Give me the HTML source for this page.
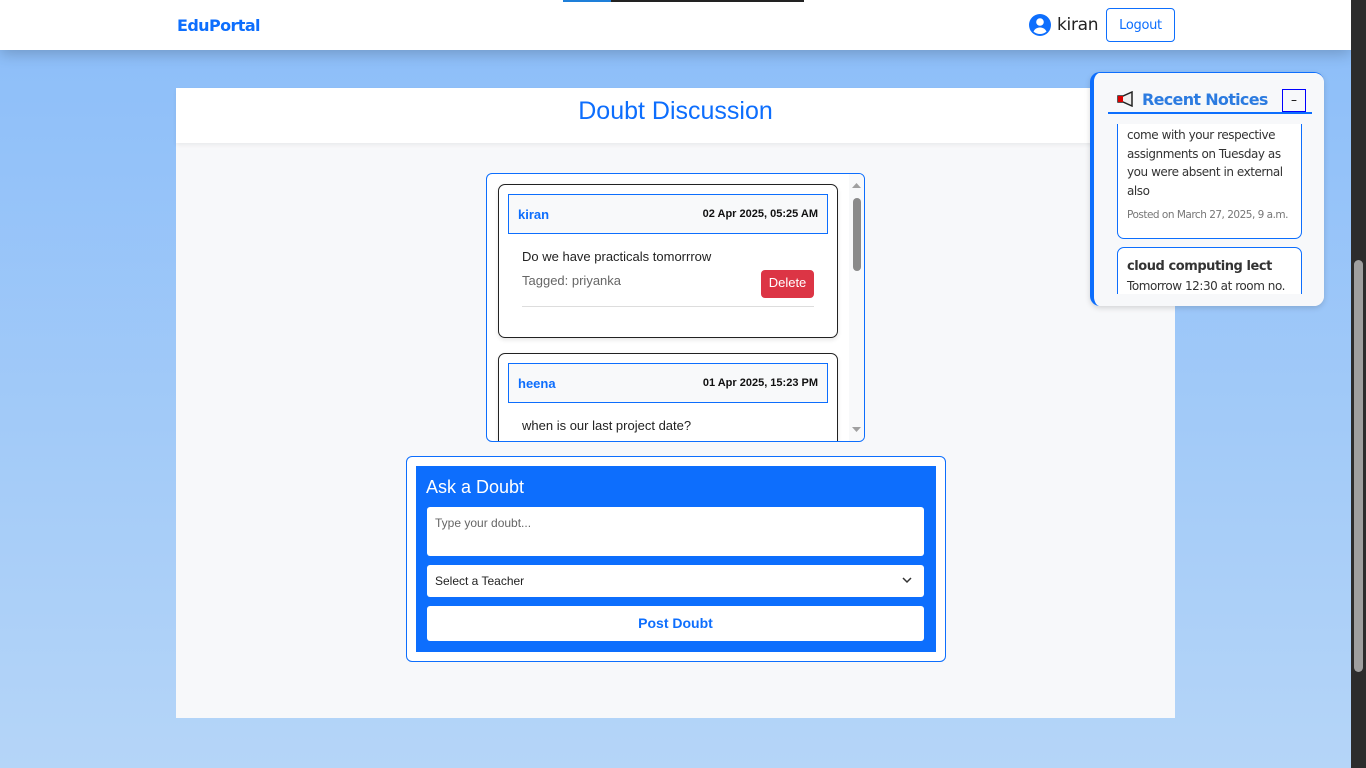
<!DOCTYPE html>
<html><head><meta charset="utf-8"><style>
*{box-sizing:border-box;margin:0;padding:0}
body{width:1366px;height:768px;overflow:hidden;font-family:"Liberation Sans",Arial,sans-serif;background:linear-gradient(#8bbdf9,#b5d5f8);position:relative}
.nav{position:absolute;left:0;top:0;width:1351px;height:50px;background:#fff;box-shadow:0 4px 14px rgba(0,0,0,.2)}
.brand{position:absolute;left:177px;top:16px;font-family:"DejaVu Sans",sans-serif;font-weight:bold;font-size:16px;color:#0d6efd;letter-spacing:-.6px}
.user{position:absolute;left:1029px;top:14px;display:flex;align-items:center;gap:6px;font-family:"DejaVu Sans",sans-serif;font-size:17px;color:#222;letter-spacing:-.3px}
.logout{position:absolute;left:1106px;top:8px;width:69px;height:34px;border:1px solid #0d6efd;border-radius:4px;color:#0d6efd;font-family:"DejaVu Sans",sans-serif;font-size:13px;text-align:center;line-height:34px;letter-spacing:-.3px}
.bar{position:absolute;top:0;left:563px;height:2px;width:241px;background:#222}
.bar i{display:block;width:48px;height:2px;background:#1e7fd9}
.sb{position:absolute;right:0;top:0;width:15px;height:768px;background:#2c2c2c}
.sb i{position:absolute;left:3px;top:260px;width:9px;height:412px;background:#9f9f9f;border-radius:5px}
.panel{position:absolute;left:176px;top:88px;width:999px;height:630px;background:#f7f8fa}
.phead{height:55px;background:#fff;text-align:center;font-size:25px;color:#0d6efd;line-height:46px;box-shadow:0 2px 4px rgba(0,0,0,.06)}
.chat{position:absolute;left:310px;top:85px;width:379px;height:269px;border:1px solid #0d6efd;border-radius:6px;background:#fff;overflow:hidden}
.chat .s{position:absolute;right:0;top:0;width:15px;height:100%;background:#f8f9fa}
.chat .s i{position:absolute;left:4px;top:24px;width:8px;height:73px;background:#8a8a8a;border-radius:4px}
.card{position:absolute;left:11px;width:340px;border:1px solid #222;border-radius:7px;background:#fff;box-shadow:0 2px 4px rgba(0,0,0,.1)}
.ch{margin:9px 9px 0;height:40px;border:1px solid #0d6efd;background:#f8f9fa;display:flex;justify-content:space-between;align-items:center;padding:0 9px}
.ch b{color:#0d6efd;font-size:13px}
.ch span{font-size:11px;font-weight:bold;color:#111}
.msg{padding:0 23px;font-size:13px;color:#222;margin-top:15px}
.ask{position:absolute;left:230px;top:368px;width:540px;height:206px;border:1px solid #0d6efd;border-radius:6px;background:#fff}
.ai{position:absolute;left:9px;top:9px;width:520px;height:186px;background:#0d6efd}
.ai h3{position:absolute;left:10px;top:11px;color:#fff;font-weight:normal;font-size:18px}
.ta{position:absolute;left:11px;top:41px;width:497px;height:49px;background:#fff;border-radius:3px;font-size:12px;color:#666;padding:9px 8px}
.sel{position:absolute;left:11px;top:99px;width:497px;height:32px;background:#fff;border-radius:3px;font-size:12px;color:#222;padding:9px 8px}
.btn{position:absolute;left:11px;top:140px;width:497px;height:35px;background:#fff;border-radius:3px;font-size:14px;font-weight:bold;color:#0d6efd;text-align:center;line-height:35px}
.not{position:absolute;left:1090px;top:72px;width:234px;height:234px;background:#f7f8fa;border-radius:10px;border-left:4px solid #0d6efd;border-top:1px solid #0d6efd;box-shadow:0 2px 6px rgba(0,0,0,.15);overflow:hidden;font-family:"DejaVu Sans",sans-serif}
.nt{position:absolute;left:14px;top:12px;width:204px;height:29px;border-bottom:2px solid #0d6efd}
.nt b{position:absolute;left:34px;top:5px;font-size:16px;color:#2c7be0;letter-spacing:-.7px}
.nt .m{position:absolute;left:174px;top:4px;width:24px;height:23px;border:1px solid #00f;font-size:12px;text-align:center;line-height:20px}
.nc{position:absolute;left:23px;width:185px;background:#fff;border:1px solid #0d6efd;border-radius:7px;padding:0 9px;font-size:12px;color:#333;line-height:18.5px;letter-spacing:-.45px}
</style></head><body>
<div class="nav"><div class="brand">EduPortal</div>
<div class="user"><svg width="22" height="22" viewBox="0 0 22 22"><circle cx="11" cy="11" r="11" fill="#0d6efd"/><circle cx="11" cy="8" r="3.8" fill="#fff"/><path d="M4.5 17.5c1.5-3 4-4 6.5-4s5 1 6.5 4c-1.800 1.7-4 2.5-6.5 2.5s-4.7-.8-6.5-2.5z" fill="#fff"/></svg>kiran</div>
<div class="logout">Logout</div></div>
<div class="bar"><i></i></div>
<div class="panel"><div class="phead">Doubt Discussion</div>
<div class="chat"><div class="s"><i></i><svg style="position:absolute;left:3px;top:8px" width="9" height="6"><path d="M0 6L4.5 1 9 6z" fill="#a0a0a0"/></svg><svg style="position:absolute;left:3px;bottom:8px" width="9" height="6"><path d="M0 0L4.5 5 9 0z" fill="#a0a0a0"/></svg></div>
<div class="card" style="top:10px;height:154px"><div class="ch"><b>kiran</b><span>02 Apr 2025, 05:25 AM</span></div>
<div class="msg">Do we have practicals tomorrrow</div>
<div style="position:absolute;left:23px;top:88px;font-size:13px;color:#666">Tagged: priyanka</div>
<div style="position:absolute;left:262px;top:85px;width:53px;height:28px;background:#dc3545;border-radius:4px;color:#fff;font-size:13px;text-align:center;line-height:26px">Delete</div>
<div style="position:absolute;left:23px;top:121px;width:292px;height:1px;background:#ddd"></div></div>
<div class="card" style="top:179px;height:120px"><div class="ch"><b>heena</b><span>01 Apr 2025, 15:23 PM</span></div>
<div class="msg">when is our last project date?</div></div>
</div>
<div class="ask"><div class="ai"><h3>Ask a Doubt</h3><div class="ta">Type your doubt...</div>
<div class="sel">Select a Teacher<svg style="position:absolute;right:12px;top:12px" width="10" height="7" viewBox="0 0 10 7"><path d="M1 1l4 4 4-4" stroke="#333" stroke-width="1.5" fill="none"/></svg></div>
<div class="btn">Post Doubt</div></div></div>
</div>
<div class="not">
<div class="nc" style="top:38px;height:128px"><div style="padding-top:14px">come with your respective assignments on Tuesday as you were absent in external also</div><div style="font-size:10.5px;color:#777;margin-top:6px;letter-spacing:-.5px;white-space:nowrap">Posted on March 27, 2025, 9 a.m.</div></div>
<div class="nc" style="top:174px;height:80px"><div style="padding-top:10px;font-weight:bold;font-size:13px">cloud computing lect</div><div style="white-space:nowrap">Tomorrow 12:30 at room no.</div></div>
<div style="position:absolute;left:0;top:0;width:230px;height:51px;background:#f7f8fa"></div>
<div class="nt"><svg style="position:absolute;left:8px;top:6px" width="22" height="16" viewBox="0 0 22 16"><path d="M2 5h5l9-4v14l-9-4H2z" fill="#eee" stroke="#222" stroke-width="1.5"/><rect x="2" y="5" width="5" height="6" fill="#d00"/></svg><b>Recent Notices</b><div class="m">–</div></div>
<div style="position:absolute;left:0;bottom:0;width:230px;height:12px;background:#f7f8fa"></div>
</div>
<div class="sb"><i></i></div>
</body></html>
